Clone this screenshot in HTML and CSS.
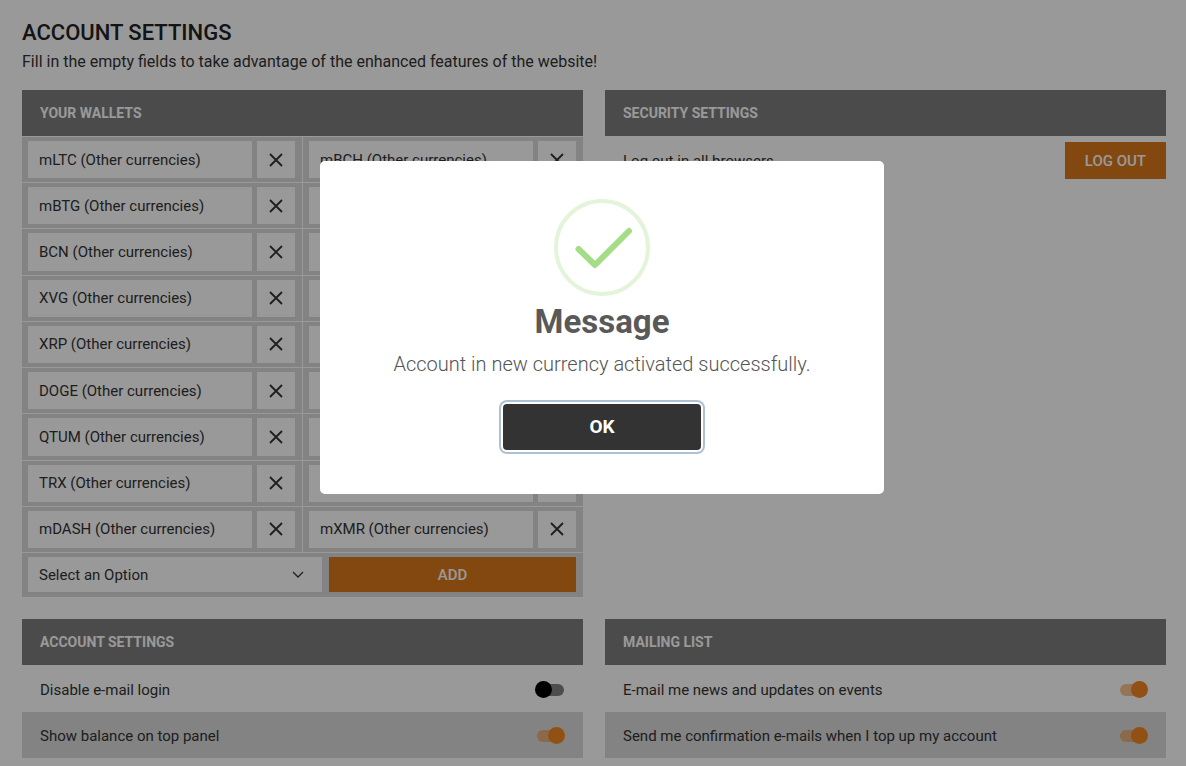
FILE: index.html
```html
<!DOCTYPE html>
<html lang="en">
<head>
    <meta charset="UTF-8">
    <meta name="viewport" content="width=device-width, initial-scale=1.0">
    <title>Account settings</title>
    <link rel="stylesheet" href="styles.css">
</head>
<body>
    <!-- icon shared by all the remove buttons -->
    <svg class="sprite" aria-hidden="true">
        <symbol id="cross" viewBox="0 0 14 14">
            <path d="M1 1 L13 13 M13 1 L1 13" fill="none" stroke="currentColor" stroke-width="1.8"/>
        </symbol>
    </svg>

    <main class="page">
        <h1 class="page-title">ACCOUNT SETTINGS</h1>
        <p class="page-text">Fill in the empty fields to take advantage of the enhanced features of the website!</p>

        <div class="columns">
            <section class="panel">
                <h2 class="panel-header">YOUR WALLETS</h2>
                <div class="wallets" id="wallets"></div>
                <form class="wallet-add">
                    <div class="select-box">
                        <select class="select" aria-label="Currency">
                            <option>Select an Option</option>
                        </select>
                        <svg class="select-arrow" viewBox="0 0 12 8" aria-hidden="true">
                            <path d="M1 1 L6 6 L11 1" fill="none" stroke="currentColor" stroke-width="1.3"/>
                        </svg>
                    </div>
                    <button type="button" class="btn btn-add">ADD</button>
                </form>
            </section>

            <section class="panel">
                <h2 class="panel-header">SECURITY SETTINGS</h2>
                <div class="security-row">
                    <span>Log out in all browsers</span>
                    <button type="button" class="btn btn-logout">LOG OUT</button>
                </div>
            </section>

            <section class="panel">
                <h2 class="panel-header">ACCOUNT SETTINGS</h2>
                <label class="option">
                    <span>Disable e-mail login</span>
                    <input type="checkbox" class="switch">
                </label>
                <label class="option">
                    <span>Show balance on top panel</span>
                    <input type="checkbox" class="switch" checked>
                </label>
            </section>

            <section class="panel">
                <h2 class="panel-header">MAILING LIST</h2>
                <label class="option">
                    <span>E-mail me news and updates on events</span>
                    <input type="checkbox" class="switch" checked>
                </label>
                <label class="option">
                    <span>Send me confirmation e-mails when I top up my account</span>
                    <input type="checkbox" class="switch" checked>
                </label>
            </section>
        </div>
    </main>

    <div class="overlay">
        <div class="modal" role="dialog" aria-modal="true" aria-labelledby="modal-title">
            <svg class="modal-icon" viewBox="0 0 96 97" aria-hidden="true">
                <ellipse cx="48" cy="48.5" rx="46" ry="46.5" fill="none" stroke="#e4f4da" stroke-width="4"/>
                <path d="M24.5 50 L41 66 L75 32" fill="none" stroke="#a5dc86" stroke-width="6" stroke-linecap="round" stroke-linejoin="round"/>
            </svg>
            <h2 class="modal-title" id="modal-title">Message</h2>
            <p class="modal-text">Account in new currency activated successfully.</p>
            <button type="button" class="modal-ok">OK</button>
        </div>
    </div>

    <script src="script.js"></script>
</body>
</html>
```

FILE: styles.css
```css
* {
    box-sizing: border-box;
}

body {
    margin: 0;
    font-family: Roboto, Arial, sans-serif;
    font-size: 15px;
    line-height: 20px;
    color: #333;
    background-color: #fff;
}

button,
select {
    font-family: inherit;
    font-size: inherit;
    line-height: inherit;
    color: inherit;
    border: none;
    border-radius: 0;
    cursor: pointer;
}

.sprite {
    display: none;
}

.page {
    padding: 18px 20px 8px 22px;
}

.page-title {
    margin: 0;
    font-size: 22px;
    line-height: 30px;
    font-weight: 500;
    color: #222;
}

.page-text {
    margin: 0 0 14px;
    font-size: 16px;
    line-height: 28px;
}

.columns {
    display: grid;
    grid-template-columns: 1fr 1fr;
    gap: 22px;
}

.panel-header {
    margin: 0;
    padding: 13px 18px;
    font-size: 14px;
    line-height: 20px;
    font-weight: 700;
    color: #fff;
    background-color: #7d7d7d;
}

/* wallets */
.wallets {
    display: grid;
    grid-template-columns: 1fr 1fr;
    grid-auto-rows: 1fr;
    column-gap: 1px;
    min-height: 416px;
}

.wallet {
    display: flex;
    gap: 5px;
    padding: 4px 7px 4px 6px;
    border-top: 1px solid #fff;
    background-color: #dadada;
}

.wallet-name {
    flex: 1;
    display: flex;
    align-items: center;
    padding: 0 11px;
    background-color: #fff;
}

.wallet-remove {
    width: 38px;
    padding: 0;
    display: flex;
    justify-content: center;
    align-items: center;
    background-color: #fff;
}

.wallet-remove svg {
    width: 14px;
    height: 14px;
}

.wallet-add {
    display: flex;
    gap: 7px;
    padding: 4px 7px 5px 6px;
    border-top: 1px solid #fff;
    background-color: #dadada;
}

.select-box {
    position: relative;
    flex: 294;
}

.select {
    width: 100%;
    height: 35px;
    padding: 0 36px 0 11px;
    appearance: none;
    background-color: #fff;
}

.select-arrow {
    position: absolute;
    top: 14px;
    right: 18px;
    width: 12px;
    height: 8px;
    pointer-events: none;
}

.btn {
    font-weight: 500;
    color: #fff;
    background-color: #da781b;
}

.btn-add {
    flex: 247;
    padding: 0;
}

.btn-logout {
    height: 37px;
    padding: 0 20px;
}

/* settings rows */
.security-row {
    display: flex;
    justify-content: space-between;
    align-items: center;
    padding: 6px 0 6px 18px;
}

.option {
    display: flex;
    justify-content: space-between;
    align-items: center;
    padding: 15px 19px 12px 18px;
    cursor: pointer;
}

.option + .option {
    padding: 14px 19px 12px 18px;
    background-color: #dadada;
}

.switch {
    position: relative;
    width: 27px;
    height: 12px;
    margin: 0;
    appearance: none;
    border-radius: 6px;
    background-color: #808080;
    cursor: pointer;
}

.switch::before {
    content: "";
    position: absolute;
    top: -3px;
    left: -2px;
    width: 17px;
    height: 17px;
    border-radius: 50%;
    background-color: #000;
}

.switch:checked {
    background-color: rgba(243, 135, 34, 0.5);
}

.switch:checked::before {
    left: 11px;
    background-color: #f38722;
}

/* message window */
.overlay {
    position: fixed;
    inset: 0;
    display: flex;
    justify-content: center;
    align-items: flex-start;
    padding: 161px 0 0 18px;
    background-color: rgba(0, 0, 0, 0.4);
}

.modal {
    display: flex;
    flex-direction: column;
    align-items: center;
    width: 100%;
    max-width: 564px;
    padding: 38px 20px 44px;
    border-radius: 5px;
    background-color: #fff;
}

.modal-icon {
    width: 96px;
    height: 97px;
}

.modal-title {
    margin: 6px 0 0;
    font-size: 33px;
    line-height: 40px;
    font-weight: 700;
    color: #595959;
}

.modal-text {
    margin: 8px 0 26px;
    font-size: 20px;
    line-height: 28px;
    font-weight: 300;
    color: #545454;
}

.modal-ok {
    width: 198px;
    height: 46px;
    font-size: 19px;
    font-weight: 700;
    color: #fff;
    border-radius: 4px;
    background-color: #333;
    box-shadow: 0 0 0 2px #fff, 0 0 0 4px rgba(50, 100, 150, 0.4);
}
```

FILE: script.js
```js
const wallets = document.getElementById("wallets");

// two wallets per row, an empty name leaves the cell blank
const names = [
    "mLTC", "mBCH",
    "mBTG", "",
    "BCN", "",
    "XVG", "",
    "XRP", "",
    "DOGE", "",
    "QTUM", "",
    "TRX", "",
    "mDASH", "mXMR"
];

names.forEach((name) => {
    const wallet = document.createElement("div");
    wallet.className = "wallet";

    const label = document.createElement("span");
    label.className = "wallet-name";
    label.textContent = name ? name + " (Other currencies)" : "";

    const button = document.createElement("button");
    button.type = "button";
    button.className = "wallet-remove";
    button.setAttribute("aria-label", "Remove");
    button.innerHTML = '<svg><use href="#cross"></use></svg>';

    wallet.append(label, button);
    wallets.append(wallet);
});
```
